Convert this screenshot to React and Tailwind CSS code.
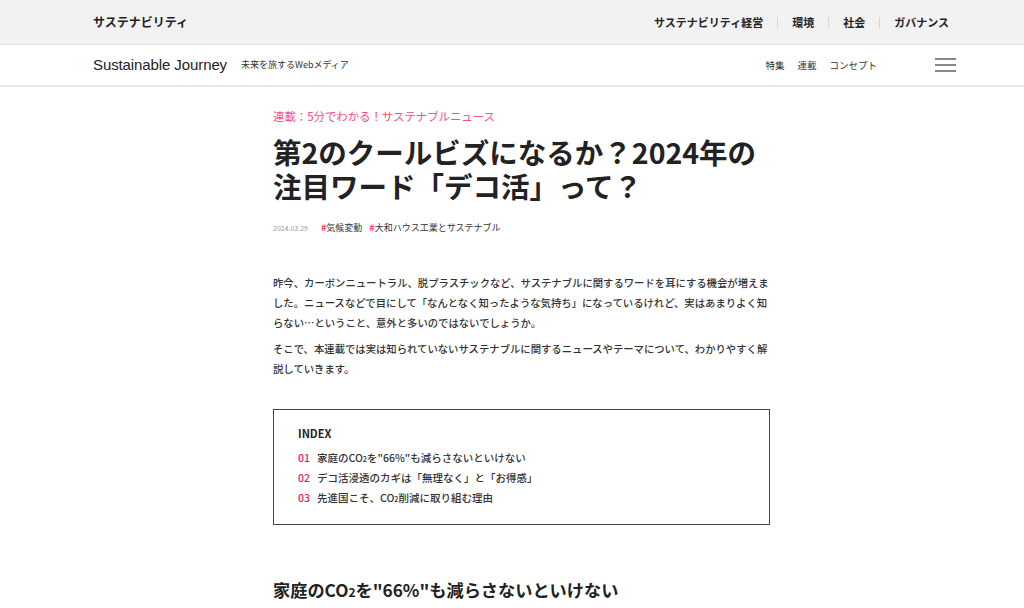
import React from "react";

const jp = { fontFamily: '"Noto Sans CJK JP", "Noto Sans", sans-serif' };

function Sep() {
  return <span className="mx-[14px] inline-block h-[11px] w-px bg-[#d6d6d6]" />;
}

export default function App() {
  return (
    <div className="min-h-[608px] w-[1024px] overflow-hidden bg-white text-[#222]" style={jp}>
      {/* top bar */}
      <div className="flex h-[45px] items-center justify-between border-b border-[#e2e2e2] bg-[#f2f2f2] pl-[93px] pr-[75px]">
        <div className="text-[12px] font-bold text-[#222]">サステナビリティ</div>
        <div className="flex items-center text-[11px] font-bold text-[#222]">
          <span>サステナビリティ経営</span>
          <Sep />
          <span>環境</span>
          <Sep />
          <span>社会</span>
          <Sep />
          <span>ガバナンス</span>
        </div>
      </div>
      {/* second bar */}
      <div className="flex h-[42px] items-center justify-between border-b-2 border-[#e8e8e8] pl-[93px] pr-[68px]">
        <div className="flex items-center">
          <span className="text-[15px] tracking-[-0.1px] text-[#222]" style={{ fontFamily: '"Liberation Sans", Arial, sans-serif' }}>
            Sustainable Journey
          </span>
          <span className="ml-[14px] text-[9px] text-[#333]">未来を旅するWebメディア</span>
        </div>
        <div className="flex items-center">
          <div className="flex items-center gap-[13px] text-[9.5px] text-[#333]">
            <span>特集</span>
            <span>連載</span>
            <span>コンセプト</span>
          </div>
          <svg className="ml-[58px]" width="21" height="14" viewBox="0 0 21 14">
            <line x1="0" y1="1" x2="21" y2="1" stroke="#555" strokeWidth="1.4" />
            <line x1="0" y1="7" x2="21" y2="7" stroke="#555" strokeWidth="1.4" />
            <line x1="0" y1="13" x2="21" y2="13" stroke="#555" strokeWidth="1.4" />
          </svg>
        </div>
      </div>

      {/* article */}
      <div className="pl-[273px] pt-[20px]">
        <div className="w-[497px]">
          <div className="text-[11.4px] leading-[18px] text-[#f64d85]">連載：5分でわかる！サステナブルニュース</div>
          <h1 className="mt-[10px] text-[28.5px] font-bold leading-[34px] text-[#222]">
            第2のクールビズになるか？2024年の
            <br />
            注目ワード「デコ活」って？
          </h1>
          <div className="mt-[18px] flex items-center leading-[14px]">
            <span className="text-[7px] text-[#999]">2024.03.29</span>
            <span className="ml-[13px] text-[9px] text-[#333]">
              <span className="font-bold text-[#f5306f]">#</span>気候変動
            </span>
            <span className="ml-[7px] text-[9px] text-[#333]">
              <span className="font-bold text-[#f5306f]">#</span>大和ハウス工業とサステナブル
            </span>
          </div>

          <p className="mt-[38px] whitespace-nowrap text-[10.35px] font-medium leading-[20px] text-[#333]">
            昨今、カーボンニュートラル、脱プラスチックなど、サステナブルに関するワードを耳にする機会が増えま
            <br />
            した。ニュースなどで目にして「なんとなく知ったような気持ち」になっているけれど、実はあまりよく知
            <br />
            らない…ということ、意外と多いのではないでしょうか。
          </p>
          <p className="mt-[6px] whitespace-nowrap text-[10.35px] font-medium leading-[20px] text-[#333]">
            そこで、本連載では実は知られていないサステナブルに関するニュースやテーマについて、わかりやすく解
            <br />
            説していきます。
          </p>

          <div className="mt-[30px] border border-[#444] pb-[16px] pl-[24px] pt-[15px]">
            <div className="text-[11px] font-bold leading-[16px] text-[#222]">INDEX</div>
            <ul className="mt-[7px] flex flex-col text-[10.5px] font-medium leading-[19.3px] text-[#333]">
              <li className="flex">
                <span className="w-[19px] text-[#e8205f]">01</span>
                <span>
                  家庭のCO<span className="text-[0.7em]">2</span>を"66%"も減らさないといけない
                </span>
              </li>
              <li className="flex">
                <span className="w-[19px] text-[#e8205f]">02</span>
                <span>デコ活浸透のカギは「無理なく」と「お得感」</span>
              </li>
              <li className="flex">
                <span className="w-[19px] text-[#e8205f]">03</span>
                <span>
                  先進国こそ、CO<span className="text-[0.7em]">2</span>削減に取り組む理由
                </span>
              </li>
            </ul>
          </div>

          <h2 className="mt-[52px] text-[17.2px] font-bold leading-[26px] text-[#222]">
            家庭のCO<span className="text-[0.7em]">2</span>を"66%"も減らさないといけない
          </h2>
        </div>
      </div>
    </div>
  );
}
